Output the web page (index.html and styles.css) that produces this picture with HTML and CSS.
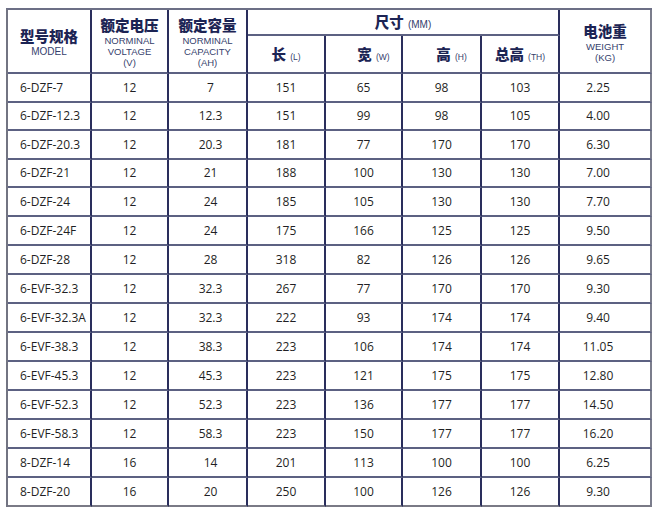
FILE: index.html
```html
<!DOCTYPE html>
<html lang="zh">
<head>
<meta charset="utf-8">
<title>电池规格表</title>
<link rel="stylesheet" href="styles.css">
</head>
<body>
<table class="spec">
  <colgroup>
    <col class="w1"><col class="w2"><col class="w3"><col class="w4"><col class="w5"><col class="w6"><col class="w7"><col class="w8">
  </colgroup>
  <thead>
    <tr class="h1">
      <th rowspan="2" class="hd hd-model"><div class="zh">型号规格</div><div class="en">MODEL</div></th>
      <th rowspan="2" class="hd hd-low"><div class="zh">额定电压</div><div class="en">NORMINAL<br>VOLTAGE<br>(V)</div></th>
      <th rowspan="2" class="hd hd-low"><div class="zh">额定容量</div><div class="en">NORMINAL<br>CAPACITY<br>(AH)</div></th>
      <th colspan="4" class="hd-size"><span class="zh">尺寸</span> <span class="en-s en-mm">(MM)</span></th>
      <th rowspan="2" class="hd hd-weight last"><div class="zh">电池重</div><div class="en">WEIGHT<br>(KG)</div></th>
    </tr>
    <tr class="h2">
      <th class="sub"><span class="zh">长</span> <span class="en-s">(L)</span></th>
      <th class="sub shift"><span class="zh">宽</span> <span class="en-s">(W)</span></th>
      <th class="sub shift"><span class="zh">高</span> <span class="en-s">(H)</span></th>
      <th class="sub"><span class="zh">总高</span> <span class="en-s">(TH)</span></th>
    </tr>
  </thead>
  <tbody>
    <tr><td class="model">6-DZF-7</td><td>12</td><td class="cap">7</td><td>151</td><td>65</td><td>98</td><td>103</td><td class="wt last">2.25</td></tr>
    <tr class="r28"><td class="model">6-DZF-12.3</td><td>12</td><td class="cap">12.3</td><td>151</td><td>99</td><td>98</td><td>105</td><td class="wt last">4.00</td></tr>
    <tr><td class="model">6-DZF-20.3</td><td>12</td><td class="cap">20.3</td><td>181</td><td>77</td><td>170</td><td>170</td><td class="wt last">6.30</td></tr>
    <tr class="r28"><td class="model">6-DZF-21</td><td>12</td><td class="cap">21</td><td>188</td><td>100</td><td>130</td><td>130</td><td class="wt last">7.00</td></tr>
    <tr><td class="model">6-DZF-24</td><td>12</td><td class="cap">24</td><td>185</td><td>105</td><td>130</td><td>130</td><td class="wt last">7.70</td></tr>
    <tr><td class="model">6-DZF-24F</td><td>12</td><td class="cap">24</td><td>175</td><td>166</td><td>125</td><td>125</td><td class="wt last">9.50</td></tr>
    <tr><td class="model">6-DZF-28</td><td>12</td><td class="cap">28</td><td>318</td><td>82</td><td>126</td><td>126</td><td class="wt last">9.65</td></tr>
    <tr><td class="model">6-EVF-32.3</td><td>12</td><td class="cap">32.3</td><td>267</td><td>77</td><td>170</td><td>170</td><td class="wt last">9.30</td></tr>
    <tr><td class="model">6-EVF-32.3A</td><td>12</td><td class="cap">32.3</td><td>222</td><td>93</td><td>174</td><td>174</td><td class="wt last">9.40</td></tr>
    <tr><td class="model">6-EVF-38.3</td><td>12</td><td class="cap">38.3</td><td>223</td><td>106</td><td>174</td><td>174</td><td class="wt last">11.05</td></tr>
    <tr><td class="model">6-EVF-45.3</td><td>12</td><td class="cap">45.3</td><td>223</td><td>121</td><td>175</td><td>175</td><td class="wt last">12.80</td></tr>
    <tr><td class="model">6-EVF-52.3</td><td>12</td><td class="cap">52.3</td><td>223</td><td>136</td><td>177</td><td>177</td><td class="wt last">14.50</td></tr>
    <tr><td class="model">6-EVF-58.3</td><td>12</td><td class="cap">58.3</td><td>223</td><td>150</td><td>177</td><td>177</td><td class="wt last">16.20</td></tr>
    <tr><td class="model">8-DZF-14</td><td>16</td><td class="cap">14</td><td>201</td><td>113</td><td>100</td><td>100</td><td class="wt last">6.25</td></tr>
    <tr><td class="model">8-DZF-20</td><td>16</td><td class="cap">20</td><td>250</td><td>100</td><td>126</td><td>126</td><td class="wt last">9.30</td></tr>
  </tbody>
</table>
</body>
</html>
```
FILE: styles.css
```css
html, body {
  margin: 0;
  padding: 0;
  background: #ffffff;
}

.spec {
  margin: 8px 0 0 6px;
  width: 646px;
  table-layout: fixed;
  border-collapse: separate;
  border-spacing: 0;
  border-top: 2px solid #6c6f86;
  border-left: 2px solid #727482;
  font-family: "Open Sans", "Noto Sans CJK SC", sans-serif;
  color: #1f1f24;
}

.w1 { width: 84px; }
.w2 { width: 77px; }
.w3 { width: 79px; }
.w4 { width: 78px; }
.w5 { width: 77px; }
.w6 { width: 79px; }
.w7 { width: 78px; }
.w8 { width: 92px; }

.spec th,
.spec td {
  padding: 0;
  border-right: 2px solid #2a2e5c;
  border-bottom: 2px solid #5c6182;
  text-align: center;
  vertical-align: middle;
  font-weight: normal;
}

.spec .last {
  border-right-color: #7b7d8c;
}

.spec tbody tr:last-child td {
  border-bottom-color: #7a7a86;
}

.h1 { height: 26px; }
.h2 { height: 38px; }
.spec tbody tr { height: 29px; }
.spec tbody tr.r28 { height: 28px; }

.zh {
  font-family: "Noto Sans CJK SC", sans-serif;
  font-weight: 900;
  font-size: 14.5px;
  line-height: 21px;
  color: #1c2454;
}

.en {
  font-family: "Liberation Sans", Arial, sans-serif;
  font-size: 9.5px;
  line-height: 11px;
  color: #35406c;
}

.en-s {
  font-family: "Liberation Sans", Arial, sans-serif;
  font-size: 8.5px;
  color: #35406c;
}

.en-mm {
  font-size: 10px;
}

.hd-model {
  padding-top: 4px;
}

.hd-model .en {
  font-size: 10px;
}

.hd-low {
  padding-top: 3px;
}

.shift {
  padding-left: 20px !important;
}

.spec td {
  font-size: 12px;
  line-height: 16px;
}

.spec td.model {
  text-align: left;
  padding-left: 12px;
}

.spec td.cap {
  padding-left: 6px;
}

.spec td.wt {
  padding-right: 14px;
}
```
